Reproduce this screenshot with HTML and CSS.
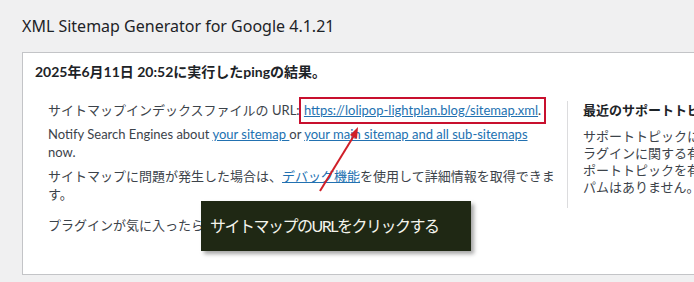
FILE: index.html
```html
<!DOCTYPE html>
<html lang="ja">
<head>
    <meta charset="UTF-8">
    <meta name="viewport" content="width=device-width, initial-scale=1.0">
    <title>XML Sitemap Generator for Google</title>
    <link rel="stylesheet" href="styles.css">
</head>
<body>
    <div class="wrap">
        <h1 class="page-title">XML Sitemap Generator for Google 4.1.21</h1>

        <div class="status-box">
            <h2 class="status-title">2025年6月11日 20:52に実行したpingの結果。</h2>

            <div class="status-body">
                <div class="status-main">
                    <p>サイトマップインデックスファイルの URL: <span class="mark"><a href="#">https://lolipop-lightplan.blog/sitemap.xml</a>.</span></p>
                    <p>Notify Search Engines about <a href="#">your sitemap </a> or <a href="#">your main sitemap and all sub-sitemaps</a> now.</p>
                    <p>サイトマップに問題が発生した場合は、<a href="#">デバッグ機能</a>を使用して詳細情報を取得できま<br>す。</p>
                    <p class="last">プラグインが気に入ったら、ぜひ評価をお願いします。</p>
                </div>

                <div class="status-side">
                    <h3 class="side-title">最近のサポートトピック</h3>
                    <p class="side-text">サポートトピックにはこのプ<br>ラグインに関する有益な情報が<br>ポートトピックを有効にする<br>パムはありません。</p>
                </div>
            </div>
        </div>

        <!-- 注釈 -->
        <svg class="arrow" width="694" height="282" viewBox="0 0 694 282">
            <line x1="320" y1="191" x2="355" y2="134" stroke="#d01f28" stroke-width="2"/>
            <polygon points="358,127 350,135 357,139" fill="#d01f28"/>
        </svg>
        <div class="callout">サイトマップのURLをクリックする</div>
    </div>
</body>
</html>
```

FILE: styles.css
```css
* {
    margin: 0;
    padding: 0;
    box-sizing: border-box;
}

body {
    background-color: #f0f0f1;
    font-family: Lato, "Noto Sans CJK JP", sans-serif;
    color: #3c434a;
    font-size: 13px;
    overflow: hidden;
}

.wrap {
    position: relative;
    width: 694px;
    height: 282px;
    padding: 15px 0 0 22px;
    overflow: hidden;
}

.page-title {
    font-family: "Noto Sans", sans-serif;
    font-size: 16px;
    font-weight: 400;
    color: #1d2327;
    line-height: 22px;
    margin-bottom: 15px;
}

/* 結果ボックス */
.status-box {
    width: 760px;
    height: 223px;
    background: #fff;
    border: 1px solid #c3c4c7;
}

.status-title {
    font-size: 14px;
    font-weight: 700;
    color: #1d2327;
    line-height: 20px;
    padding: 9px 12px 0;
}

.status-body {
    display: flex;
    margin-top: 19px;
}

.status-main {
    width: 544px;
    flex-shrink: 0;
    padding-left: 25px;
    padding-right: 12px;
}

.status-main p {
    line-height: 18px;
    margin-bottom: 6px;
}

.status-main p.last {
    margin-top: 13px;
}

.status-main a {
    color: #2271b1;
    text-decoration: underline;
}

.mark {
    border: 2px solid #c8102e;
    padding: 3px 3px 4px 3px;
    margin-left: -4px;
}

.status-side {
    border-left: 1px solid #dcdcde;
    padding-left: 15px;
    height: 107px;
    white-space: nowrap;
}

.side-title {
    font-size: 13px;
    font-weight: 700;
    color: #1d2327;
    line-height: 18px;
    margin-bottom: 9px;
}

.side-text {
    line-height: 17px;
}

/* 注釈 */
.arrow {
    position: absolute;
    left: 0;
    top: 0;
}

.callout {
    position: absolute;
    left: 201px;
    top: 201px;
    width: 270px;
    height: 50px;
    background: #1f2814;
    color: #f4f4ec;
    font-size: 16px;
    letter-spacing: -1.5px;
    line-height: 50px;
    padding-left: 9px;
    box-shadow: 3px 3px 4px rgba(0, 0, 0, 0.35);
}
```
